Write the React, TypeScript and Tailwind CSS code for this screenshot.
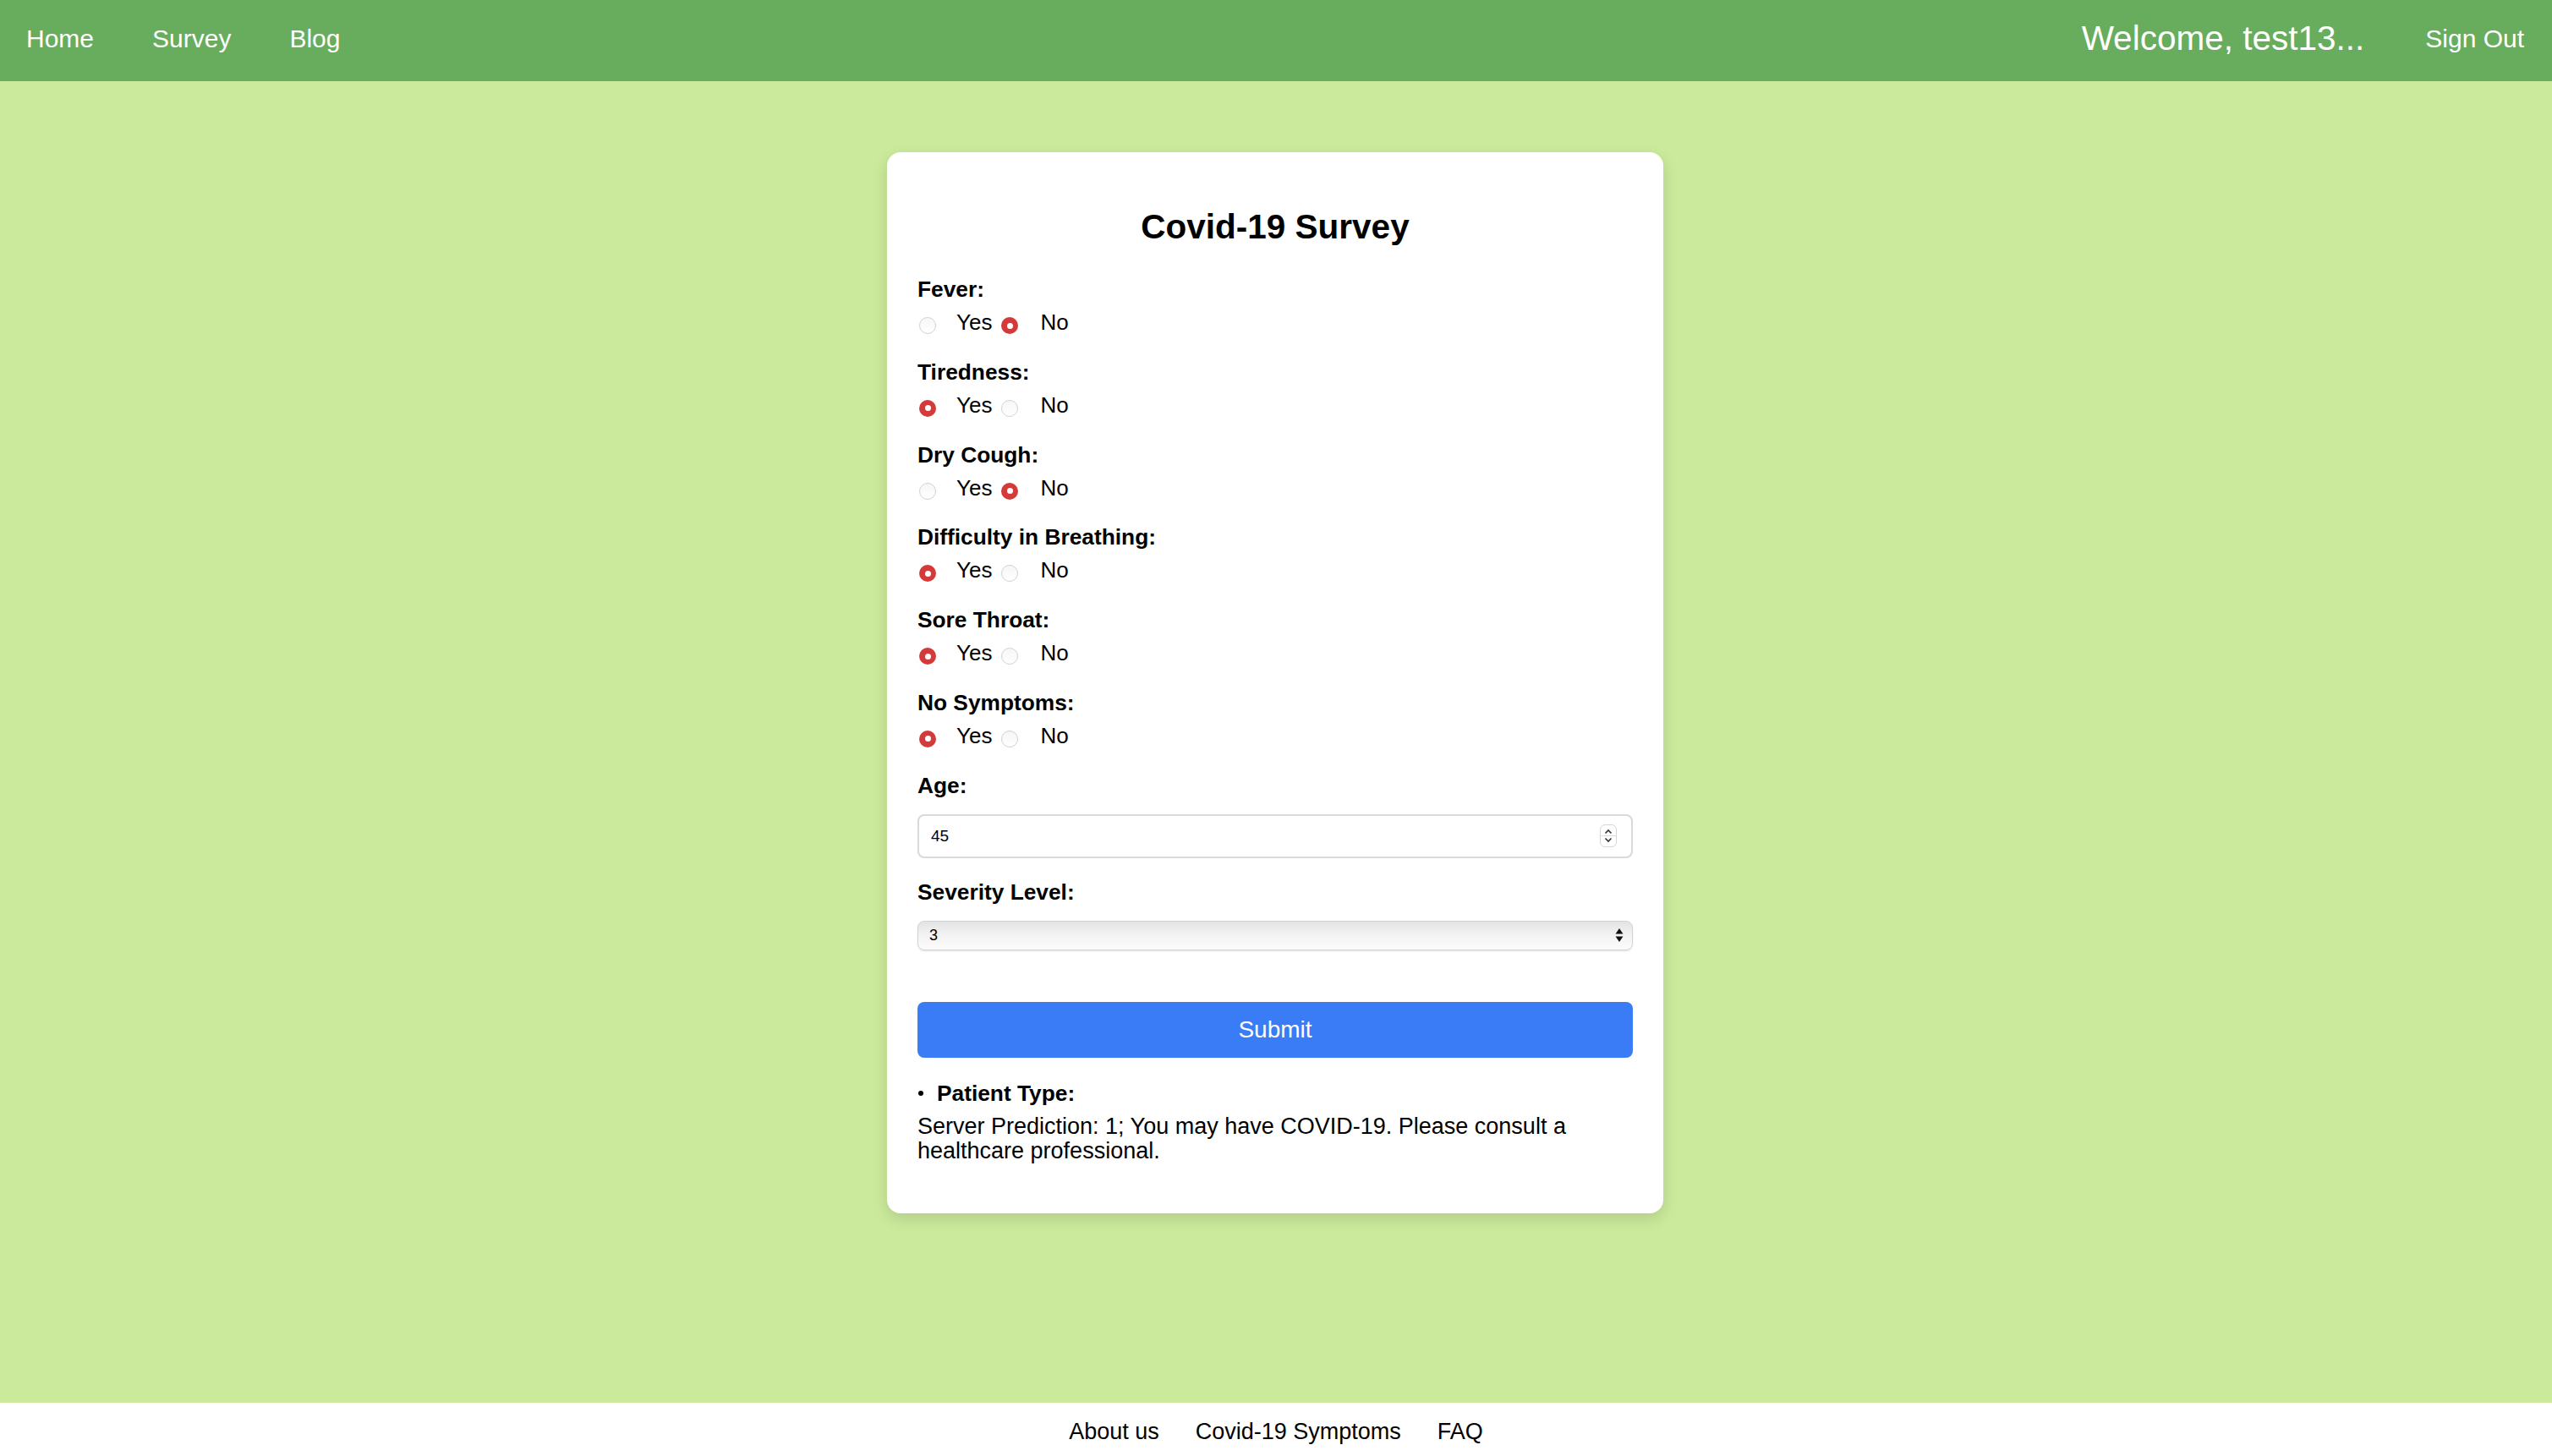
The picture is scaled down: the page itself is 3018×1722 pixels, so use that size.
import React from 'react';

interface Question {
  label: string;
  answer: 'yes' | 'no';
}

const QUESTIONS: Question[] = [
  { label: 'Fever:', answer: 'no' },
  { label: 'Tiredness:', answer: 'yes' },
  { label: 'Dry Cough:', answer: 'no' },
  { label: 'Difficulty in Breathing:', answer: 'yes' },
  { label: 'Sore Throat:', answer: 'yes' },
  { label: 'No Symptoms:', answer: 'yes' },
];

const FONT = { fontFamily: '"Liberation Sans", Arial, Helvetica, sans-serif' };

function Radio({ checked }: { checked: boolean }) {
  if (checked) {
    return (
      <span className="mt-[9px] flex h-[20px] w-[20px] shrink-0 items-center justify-center rounded-full bg-[#d43a3a]">
        <span className="h-[7px] w-[7px] rounded-full bg-white" />
      </span>
    );
  }
  return (
    <span className="mt-[9px] h-[20px] w-[20px] shrink-0 rounded-full border border-[#d2d2d2] bg-gradient-to-b from-[#f6f6f6] to-white" />
  );
}

function RadioGroup({ question }: { question: Question }) {
  return (
    <div className="mb-[28.8px]">
      <div className="text-[26.3px] font-bold leading-[30px]">{question.label}</div>
      <div className="mt-[9px] flex h-[30px] items-start text-[26px] leading-[30px]">
        <span className="ml-[2px]" />
        <Radio checked={question.answer === 'yes'} />
        <span className="ml-[24px] mr-[11px]">Yes</span>
        <Radio checked={question.answer === 'no'} />
        <span className="ml-[26px]">No</span>
      </div>
    </div>
  );
}

export default function App() {
  return (
    <div className="flex min-h-screen flex-col bg-[#cbea9b] text-black" style={FONT}>
      <nav className="flex h-[96px] shrink-0 items-center justify-between bg-[#68ad5e] pb-[5px] pl-[31px] pr-[33px] text-white">
        <div className="flex items-center gap-[69px] text-[30px]">
          <a>Home</a>
          <a>Survey</a>
          <a>Blog</a>
        </div>
        <div className="flex items-center gap-[72px]">
          <span className="text-[40.5px] leading-none">Welcome, test13...</span>
          <a className="text-[30px]">Sign Out</a>
        </div>
      </nav>

      <main className="flex flex-1 justify-center pt-[84px]">
        <div className="h-fit w-[918px] -translate-x-[1px] rounded-[16px] bg-white p-[36px] shadow-[0_6px_18px_rgba(0,0,0,0.13)]">
          <h2 className="mb-[36px] mt-[29px] text-center text-[40.5px] font-bold leading-[46px]">Covid-19 Survey</h2>

          {QUESTIONS.map((q) => (
            <RadioGroup key={q.label} question={q} />
          ))}

          <div className="text-[26.3px] font-bold leading-[30px]">Age:</div>
          <div className="mt-[19px] flex h-[52px] items-center justify-between rounded-[8px] border-2 border-[#d9d9d9] pl-[14px] pr-[17px]">
            <span className="text-[19px]">45</span>
            <span className="flex h-[27px] w-[20px] flex-col items-center justify-center rounded-[6px] border border-[#d6d6d6]">
              <svg width="10" height="7" viewBox="0 0 10 7" className="mb-[1px]">
                <path d="M1.5 5.5 L5 2 L8.5 5.5" fill="none" stroke="#333" strokeWidth="1.6" />
              </svg>
              <span className="h-px w-full bg-[#dcdcdc]" />
              <svg width="10" height="7" viewBox="0 0 10 7" className="mt-[1px]">
                <path d="M1.5 1.5 L5 5 L8.5 1.5" fill="none" stroke="#333" strokeWidth="1.6" />
              </svg>
            </span>
          </div>

          <div className="mt-[25px] text-[26.3px] font-bold leading-[30px]">Severity Level:</div>
          <div className="mt-[19px] flex h-[35px] items-center justify-between rounded-[8px] border border-[#d3d3d3] bg-gradient-to-b from-[#e4e4e4] via-[#f3f3f3] to-[#fcfcfc] pl-[13px] pr-[10px] shadow-[0_1px_2px_rgba(0,0,0,0.12)]">
            <span className="text-[18px]">3</span>
            <svg width="10" height="16" viewBox="0 0 10 16">
              <path d="M5 0 L9.5 6.5 H0.5 Z" fill="#111" />
              <path d="M5 16 L9.5 9.5 H0.5 Z" fill="#111" />
            </svg>
          </div>

          <button
            type="button"
            className="mt-[61px] flex h-[66px] w-full items-center justify-center rounded-[8px] bg-[#3a7bf6] text-[28px] text-white"
          >
            Submit
          </button>

          <div className="mt-[27px] flex items-center text-[26.3px] font-bold leading-[30px]">
            <span className="ml-[1px] mr-[16px] mt-[1px] h-[6px] w-[6px] rounded-full bg-black" />
            Patient Type:
          </div>
          <p className="mb-[23px] mt-[10px] text-[27px] leading-[29px]">
            Server Prediction: 1; You may have COVID-19. Please consult a healthcare professional.
          </p>
        </div>
      </main>

      <footer className="flex h-[63px] shrink-0 items-center justify-center gap-[43px] bg-white pt-[5px] text-[27px]">
        <a>About us</a>
        <a>Covid-19 Symptoms</a>
        <a>FAQ</a>
      </footer>
    </div>
  );
}
